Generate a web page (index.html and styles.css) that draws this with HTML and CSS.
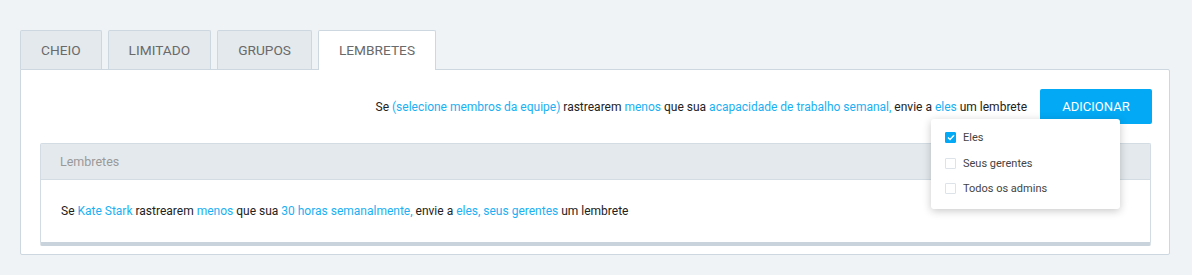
FILE: index.html
```html
<!DOCTYPE html>
<html lang="pt">
<head>
<meta charset="utf-8">
<link rel="stylesheet" href="styles.css">
</head>
<body>
<div class="page">
  <div class="tabs">
    <div class="tab">CHEIO</div>
    <div class="tab">LIMITADO</div>
    <div class="tab">GRUPOS</div>
    <div class="tab active">LEMBRETES</div>
  </div>
  <div class="panel">
    <div class="toolbar">
      <p class="rule">Se <span class="link">(selecione membros da equipe)</span> rastrearem <span class="link">menos</span> que sua <span class="link">acapacidade de trabalho semanal,</span> envie a <span class="link">eles</span> um lembrete</p>
      <button class="btn">ADICIONAR</button>
    </div>
    <div class="card">
      <div class="card-head">Lembretes</div>
      <div class="card-body">
        <p class="rule">Se <span class="link">Kate Stark</span> rastrearem <span class="link">menos</span> que sua <span class="link">30 horas semanalmente,</span> envie a <span class="link">eles, seus gerentes</span> um lembrete</p>
      </div>
    </div>
    <div class="menu">
      <div class="menu-item"><span class="check on"><svg width="8" height="7" viewBox="0 0 8 7"><path d="M1 3.6 L3 5.5 L7 1.2" fill="none" stroke="#fff" stroke-width="1.4"/></svg></span>Eles</div>
      <div class="menu-item"><span class="check"></span>Seus gerentes</div>
      <div class="menu-item"><span class="check"></span>Todos os admins</div>
    </div>
  </div>
</div>
</body>
</html>
```

FILE: styles.css
```css
* { box-sizing: border-box; }
html, body { margin: 0; padding: 0; }
body {
  background: #f0f3f6;
  font-family: Roboto, "Liberation Sans", sans-serif;
  color: #222;
  width: 1192px;
  height: 275px;
  overflow: hidden;
}
.page { padding: 30px 22px 0 20px; }
.tabs { display: flex; gap: 6px; height: 39px; }
.tab {
  height: 39px;
  padding: 0 20px;
  border: 1px solid #cdd7df;
  border-bottom: none;
  background: #e4e9ed;
  color: #6a6a6a;
  font-size: 13.7px;
  line-height: 38px;
  border-radius: 2px 2px 0 0;
}
.tab.active {
  background: #fff;
  height: 40px;
  position: relative;
  z-index: 1;
}
.panel {
  position: relative;
  background: #fff;
  border: 1px solid #cdd7df;
  border-radius: 0 2px 2px 2px;
  padding: 19px 18px 9px 19px;
  height: 186px;
}
.toolbar { display: flex; justify-content: flex-end; align-items: center; gap: 13px; height: 35px; }
.rule { margin: 0; font-size: 12px; color: #222; }
.link { color: #1ab0f2; }
.btn {
  width: 112px;
  height: 35px;
  border: none;
  border-radius: 2px;
  background: #03a9f4;
  color: #fff;
  font-family: Roboto, "Liberation Sans", sans-serif;
  font-size: 13px;
  margin-right: -1px;
}
.card {
  margin-top: 19px;
  border: 1px solid #d3dce3;
  border-bottom: 4px solid #c8d3db;
  border-radius: 2px;
  background: #fff;
}
.card-head {
  height: 36px;
  background: #e4e9ed;
  border-bottom: 1px solid #d3dce3;
  color: #999;
  font-size: 12.5px;
  line-height: 35px;
  padding-left: 19px;
}
.card-body { height: 62px; display: flex; align-items: center; padding-left: 20px; }
.menu {
  position: absolute;
  left: 910px;
  top: 49px;
  width: 189px;
  height: 90px;
  background: #fff;
  border-radius: 3px;
  box-shadow: 0 2px 8px rgba(0,0,0,0.22);
  padding: 6px 14px;
  z-index: 2;
}
.menu-item {
  display: flex;
  align-items: center;
  height: 25.5px;
  font-size: 11px;
  color: #444;
}
.check {
  width: 11px;
  height: 11px;
  border: 1px solid #dde3e8;
  border-radius: 1px;
  margin-right: 7px;
  display: flex;
  align-items: center;
  justify-content: center;
}
.check.on { background: #03a9f4; border-color: #03a9f4; }
```
